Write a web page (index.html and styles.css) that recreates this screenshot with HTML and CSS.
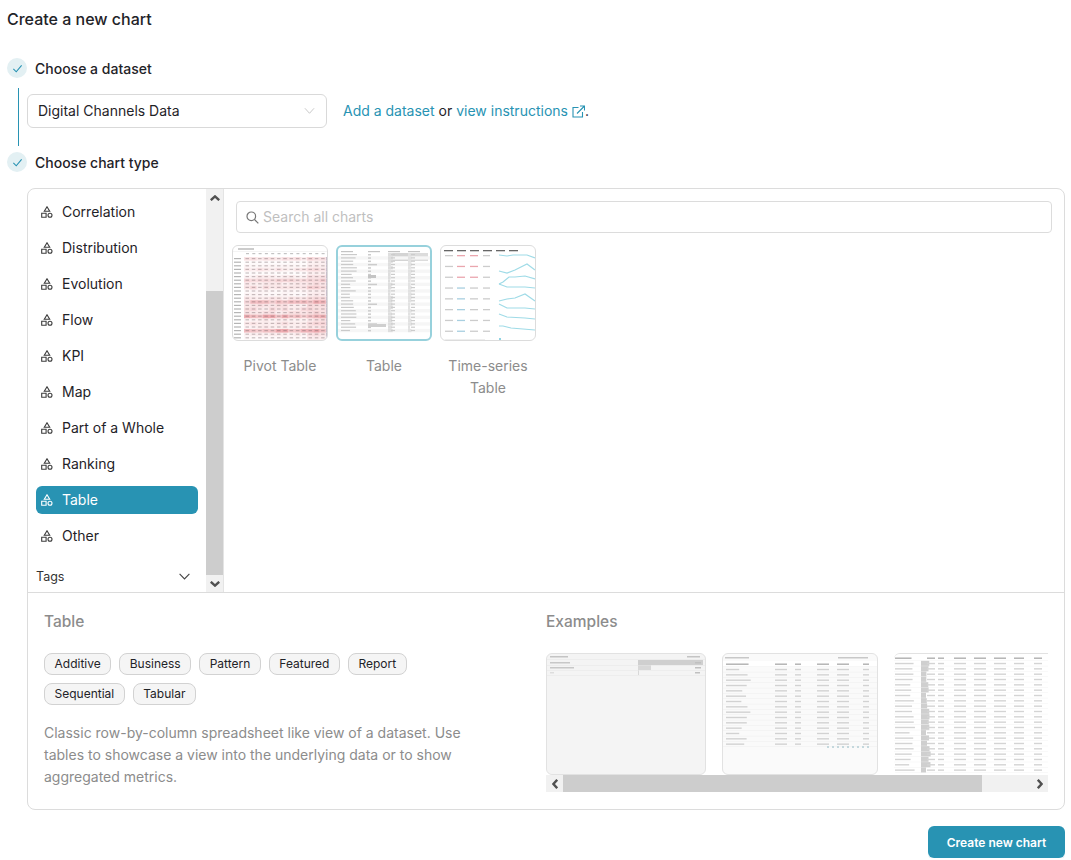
FILE: index.html
```html
<!DOCTYPE html>
<html lang="en">
<head>
  <meta charset="UTF-8" />
  <meta name="viewport" content="width=device-width, initial-scale=1.0" />
  <title>Create a new chart</title>
  <link rel="stylesheet" href="styles.css">
</head>
<body>
  <svg class="defs" width="0" height="0">
    <symbol id="shapes" viewBox="0 0 12 12">
      <path d="M6 .8 8.700 5.200H3.300Z M.7 7.300h4.400v4H.7Z" fill="none" stroke="currentColor" stroke-width="1.100" />
      <circle cx="9" cy="9.300" r="2" fill="none" stroke="currentColor" stroke-width="1.100" />
    </symbol>
    <symbol id="check" viewBox="0 0 12 12">
      <path d="M1.500 6.500 4.600 9.600 10.500 2.600" fill="none" stroke="#2893b3" stroke-width="1.200" />
    </symbol>
    <symbol id="up" viewBox="0 0 10 6">
      <path d="M.8 5.200 5 1.400 9.200 5.200" fill="none" stroke="#505050" stroke-width="2.400" />
    </symbol>
    <symbol id="down" viewBox="0 0 10 6">
      <path d="M.8.8 5 4.600 9.200.8" fill="none" stroke="#505050" stroke-width="2.400" />
    </symbol>
    <symbol id="left" viewBox="0 0 6 10">
      <path d="M5.200.8 1.400 5 5.200 9.200" fill="none" stroke="#505050" stroke-width="2.400" />
    </symbol>
    <symbol id="right" viewBox="0 0 6 10">
      <path d="M.8.8 4.600 5 .8 9.200" fill="none" stroke="#505050" stroke-width="2.400" />
    </symbol>
  </svg>

  <h1 class="page-title">Create a new chart</h1>

  <div class="step">
    <span class="step-dot"><svg class="step-check"><use href="#check" /></svg></span>
    <span class="step-label">Choose a dataset</span>
  </div>
  <div class="dataset-row">
    <div class="select">
      <span>Digital Channels Data</span>
      <svg class="select-arrow" viewBox="0 0 12 8"><path d="M1 1 6 6.500 11 1" fill="none" stroke="#c4c4c4" /></svg>
    </div>
    <p class="dataset-help">
      <a>Add a dataset</a> or <a>view instructions</a>
      <svg class="ext-icon" viewBox="0 0 13 13"><path d="M6.500 2.500H1v9.500h9.500V7 M5 8.500 12 1.500 M8 1h4.500v4.500" fill="none" stroke="#2893b3" stroke-width="1.100" /></svg>.
    </p>
  </div>
  <div class="step">
    <span class="step-dot"><svg class="step-check"><use href="#check" /></svg></span>
    <span class="step-label">Choose chart type</span>
  </div>

  <div class="panel">
    <div class="panel-top">
      <div class="sidebar">
        <ul class="cat-list">
          <li class="cat"><svg class="cat-icon"><use href="#shapes" /></svg>Correlation</li>
          <li class="cat"><svg class="cat-icon"><use href="#shapes" /></svg>Distribution</li>
          <li class="cat"><svg class="cat-icon"><use href="#shapes" /></svg>Evolution</li>
          <li class="cat"><svg class="cat-icon"><use href="#shapes" /></svg>Flow</li>
          <li class="cat"><svg class="cat-icon"><use href="#shapes" /></svg>KPI</li>
          <li class="cat"><svg class="cat-icon"><use href="#shapes" /></svg>Map</li>
          <li class="cat"><svg class="cat-icon"><use href="#shapes" /></svg>Part of a Whole</li>
          <li class="cat"><svg class="cat-icon"><use href="#shapes" /></svg>Ranking</li>
          <li class="cat active"><svg class="cat-icon"><use href="#shapes" /></svg>Table</li>
          <li class="cat"><svg class="cat-icon"><use href="#shapes" /></svg>Other</li>
        </ul>
        <div class="tags-row">
          <span>Tags</span>
          <svg class="tags-arrow" viewBox="0 0 11 7"><path d="M.6.8 5.500 6 10.400.8" fill="none" stroke="#444" stroke-width="1.100" /></svg>
        </div>
      </div>
      <div class="vscroll">
        <div class="scroll-btn"><svg class="arrow-v"><use href="#up" /></svg></div>
        <div class="vscroll-gap"></div>
        <div class="vscroll-thumb"></div>
        <div class="scroll-btn"><svg class="arrow-v"><use href="#down" /></svg></div>
      </div>
      <div class="gallery">
        <div class="search">
          <svg class="search-icon" viewBox="0 0 13 13"><circle cx="5.300" cy="5.300" r="4.300" fill="none" stroke="#777" stroke-width="1.200" /><path d="M8.500 8.500 12.300 12.300" stroke="#777" stroke-width="1.200" /></svg>
          <span>Search all charts</span>
        </div>
        <div class="chart-grid">
          <div class="chart-card">
            <div class="chart-thumb" id="thumb-pivot"></div>
            <div class="chart-name">Pivot Table</div>
          </div>
          <div class="chart-card">
            <div class="chart-thumb selected" id="thumb-table"></div>
            <div class="chart-name">Table</div>
          </div>
          <div class="chart-card">
            <div class="chart-thumb" id="thumb-series"></div>
            <div class="chart-name">Time-series Table</div>
          </div>
        </div>
      </div>
    </div>

    <div class="details">
      <div class="details-info">
        <h2 class="details-title">Table</h2>
        <div class="chips">
          <span class="chip">Additive</span>
          <span class="chip">Business</span>
          <span class="chip">Pattern</span>
          <span class="chip">Featured</span>
          <span class="chip">Report</span>
          <span class="chip">Sequential</span>
          <span class="chip">Tabular</span>
        </div>
        <p class="details-desc">Classic row-by-column spreadsheet like view of a dataset. Use tables to showcase a view into the underlying data or to show aggregated metrics.</p>
      </div>
      <div class="details-examples">
        <h2 class="details-title">Examples</h2>
        <div class="example-row">
          <div class="example ex-a" id="ex-bars"></div>
          <div class="example ex-b" id="ex-games"></div>
          <div class="example ex-c" id="ex-people"></div>
        </div>
        <div class="hscroll">
          <div class="scroll-btn"><svg class="arrow-h"><use href="#left" /></svg></div>
          <div class="hscroll-thumb"></div>
          <div class="hscroll-gap"></div>
          <div class="scroll-btn"><svg class="arrow-h"><use href="#right" /></svg></div>
        </div>
      </div>
    </div>
  </div>

  <div class="actions">
    <button class="create-btn">Create new chart</button>
  </div>

  <script src="thumbs.js"></script>
</body>
</html>
```

FILE: styles.css
```css
* { box-sizing: border-box; }
body {
  margin: 0;
  padding: 8px 6px 0 7px;
  background: #fff;
  color: #1f2328;
  font-family: Inter, "Noto Sans", sans-serif;
  font-size: 14px;
  line-height: 22px;
}
.defs { position: absolute; }
.page-title { margin: 0 0 27px; font-size: 16px; font-weight: 500; line-height: 23px; }

.step { display: flex; align-items: center; height: 20px; gap: 8px; }
.step-dot {
  display: flex;
  align-items: center;
  justify-content: center;
  width: 20px;
  height: 20px;
  border-radius: 50%;
  background: #e3f0f3;
}
.step-check { width: 11px; height: 11px; }
.step-label { font-weight: 500; padding-top: 1px; }

.dataset-row {
  display: flex;
  align-items: flex-start;
  height: 58px;
  margin: 10px 0 6px 11px;
  padding: 6px 0 0 8px;
  border-left: 1px solid #2893b3;
  gap: 16px;
}
.select {
  display: flex;
  align-items: center;
  justify-content: space-between;
  width: 300px;
  height: 34px;
  padding: 0 11px 0 10px;
  border: 1px solid #d9d9d9;
  border-radius: 6px;
}
.select-arrow { width: 11px; height: 8px; }
.dataset-help { margin: 0; padding-top: 6px; }
.dataset-help a { color: #2893b3; }
.ext-icon { width: 13px; height: 13px; vertical-align: -2px; }

.panel {
  margin: 16px 0 0 20px;
  height: 622px;
  border: 1px solid #dcdcdc;
  border-radius: 8px;
  overflow: hidden;
}
.panel-top { display: flex; height: 404px; border-bottom: 1px solid #dcdcdc; }

.sidebar { width: 178px; padding: 9px 8px 0; }
.cat-list { list-style: none; margin: 0; padding: 0; display: flex; flex-direction: column; gap: 8px; }
.cat {
  display: flex;
  align-items: center;
  height: 28px;
  padding-left: 5px;
  gap: 9px;
  border-radius: 6px;
}
.cat-icon { width: 12px; height: 12px; color: #3c3c3c; }
.cat.active { background: #2893b3; color: #fff; }
.cat.active .cat-icon { color: #fff; }
.tags-row {
  display: flex;
  align-items: center;
  justify-content: space-between;
  height: 20px;
  margin-top: 16px;
  padding: 1px 8px 0 0;
  font-size: 12.500px;
  color: #333;
}
.tags-arrow { width: 11px; height: 7px; }

.vscroll { display: flex; flex-direction: column; width: 17px; height: 403px; background: #f1f1f1; }
.vscroll-gap { height: 85px; }
.vscroll-thumb { height: 284px; background: #cdcdcd; }
.scroll-btn { display: flex; align-items: center; justify-content: center; flex: 0 0 17px; height: 17px; width: 17px; background: #f1f1f1; }
.arrow-v { width: 10px; height: 6px; }
.arrow-h { width: 6px; height: 10px; }

.gallery { flex: 1; padding: 12px 12px 0; border-left: 1px solid #e4e4e4; }
.search {
  display: flex;
  align-items: center;
  height: 32px;
  padding-left: 9px;
  gap: 4px;
  border: 1px solid #dcdcdc;
  border-radius: 4px;
  color: #bfbfbf;
}
.search-icon { width: 13px; height: 13px; }
.chart-grid { display: flex; gap: 8px; margin: 12px 0 0 -4px; }
.chart-card { width: 96px; }
.chart-thumb {
  width: 96px;
  height: 96px;
  border: 1px solid #dcdcdc;
  border-radius: 6px;
  overflow: hidden;
}
.chart-thumb.selected { border: 2px solid #97d1dc; }
.chart-thumb svg, .example svg { display: block; filter: blur(.6px); }
.chart-name { margin-top: 14px; text-align: center; color: #8c8c8c; }

.details { display: flex; height: 216px; padding: 18px 16px 0; }
.details-info { width: 502px; }
.details-examples { width: 502px; }
.details-title { margin: 0 0 20px; font-size: 15.500px; font-weight: 500; line-height: 22px; color: #8c8c8c; }
.chips { display: flex; flex-wrap: wrap; gap: 8px; width: 400px; }
.chip {
  height: 22px;
  padding: 0 9.500px;
  border: 1px solid #d2d2d2;
  border-radius: 8px;
  background: #f5f5f5;
  font-size: 12px;
  line-height: 20px;
}
.details-desc { width: 430px; margin: 17px 0 0; color: #8c8c8c; }

.example-row { display: flex; gap: 16px; width: 502px; height: 122px; overflow: hidden; }
.example { flex: none; height: 122px; border: 1px solid #e2e2e2; border-radius: 6px; overflow: hidden; }
.ex-a { width: 160px; background: #f4f4f4; }
.ex-b { width: 156px; background: #fafafa; }
.ex-c { width: 172px; background: #fff; border-width: 1px 0 0; }

.hscroll { display: flex; height: 17px; background: #f1f1f1; }
.hscroll-thumb { width: 419px; background: #cdcdcd; }
.hscroll-gap { flex: 1; }

.actions { display: flex; justify-content: flex-end; margin-top: 16px; }
.create-btn {
  width: 137px;
  height: 32px;
  border: 0;
  border-radius: 6px;
  background: #2893b3;
  color: #fff;
  font-family: inherit;
  font-size: 12px;
  font-weight: 600;
  box-shadow: 0 2px 0 #e6f3f6;
}
```

FILE: thumbs.js
```js
// the chart previews are tiny and unreadable, so draw them as marks
function rect(x, y, w, h, fill) {
  return `<rect x="${x}" y="${y}" width="${w}" height="${h}" fill="${fill}" />`;
}

function paint(id, w, h, body) {
  document.getElementById(id).innerHTML = `<svg width="${w}" height="${h}" viewBox="0 0 ${w} ${h}">${body}</svg>`;
}

// repeatable noise so the marks don't change between loads
let seed = 7;
function rnd() {
  seed = (seed * 16807) % 2147483647;
  return (seed % 1000) / 1000;
}

function pivot() {
  const heat = [.3, .05, .1, .25, .05, .2, .4, .25, .35, .1, .1, .25, .7, .3, .35, .3, .85, .2, .3, .2, .9, .2, .1];
  let s = rect(5, 2, 16, 2, "#ccc") + rect(0, 5, 94, .5, "#e8e8e8");
  for (let c = 0; c < 13; c++) s += rect(13 + c * 6.300, 7, 3, 1.200, "#c4c4c4");
  heat.forEach((h, r) => {
    const y = 12 + r * 3.600;
    s += rect(1, y, 7, 1.200, "#b5b5b5");
    for (let c = 0; c < 13; c++) {
      const a = Math.min(1, h * (.6 + rnd() * .7) + (c > 9 ? .12 : 0));
      s += rect(11 + c * 6.300, y - 1, 6.300, 3.600, `rgba(226,110,118,${a * .6})`);
      s += rect(12.500 + c * 6.300, y, 3.500, 1.200, "rgba(120,100,105,.4)");
    }
    s += rect(93, y - 1, 3, 3.600, "#c8bfcc");
  });
  paint("thumb-pivot", 94, 94, s);
}

function table() {
  let s = rect(3, 4, 12, 1.200, "#c4c4c4") + rect(30, 4, 12, 1.200, "#c4c4c4") + rect(50, 4, 12, 1.200, "#c4c4c4") + rect(70, 4, 12, 1.200, "#c4c4c4");
  s += rect(50, 6, 20, 8, "#d4d4d4") + rect(70, 6, 20, 8, "#dcdcdc");
  for (let r = 0; r < 24; r++) {
    const y = 7 + r * 3.300;
    if (r % 2) s += rect(0, y - 1, 92, 3.300, "#f6f6f6");
    s += rect(3, y, 8 + rnd() * 8, 1.200, "#cacaca");
    s += rect(30, y, 3 + (r % 6 === 3 ? 6 : 0), 1.500, "#cccccc");
    s += rect(50, y - 1, 2 + rnd() * 3, 3.300, "#dedede");
    s += rect(70, y - 1, 2 + rnd() * 2, 3.300, "#e2e2e2");
    s += rect(53, y, 4, 1.200, "#cccccc") + rect(73, y, 4, 1.200, "#cccccc");
  }
  s += rect(30, 28, 8, 3, "#c4c4c4") + rect(30, 77, 18, 3, "#cfcfcf");
  paint("thumb-table", 92, 92, s);
}

function series() {
  let s = "";
  for (let i = 0; i < 6; i++) s += rect(3 + i * 13, 4, 9, 1.300, "#666");
  const colors = ["#eaa6ae", "#eaa6ae", "#eaa6ae", "#a8cfe0", "#a8cfe0", "#a8cfe0", "#a8cfe0", "#a8cfe0"];
  const lines = [
    "M58 9 66 10 72 9 86 9 94 12",
    "M58 25 66 27 74 24 86 18 94 24",
    "M58 38 62 36 68 31 74 31 84 30 94 33",
    "M58 38 66 41 84 41 94 42",
    "M58 55 66 53 74 52 84 48 94 55",
    "M58 58 66 62 84 62 94 63",
    "M58 68 66 71 84 72 94 73",
    "M58 80 62 80 70 82 94 84"
  ];
  colors.forEach((c, r) => {
    const y = 9 + r * 10.800;
    s += rect(4, y, 8, 1.300, "#cccccc") + rect(16, y, 8, 1.300, c) + rect(29, y, 8, 1.300, r < 3 ? c : "#cccccc");
    s += rect(42, y, 7, 1.300, "#cccccc");
    s += `<path d="${lines[r]}" fill="none" stroke="#9fdbe7" stroke-width="1.200" />`;
  });
  s += rect(58, 92, 2, 2, "#8fd3e2") + rect(4, 93, 40, 1, "#eee");
  paint("thumb-series", 94, 94, s);
}

function examples() {
  let a = rect(3, 2, 18, 1.500, "#c4c4c4") + rect(140, 2, 13, 1.500, "#c4c4c4");
  a += rect(91, 6, 65, 5, "#cfcfcf") + rect(91, 11, 13, 5, "#d8d8d8") + rect(91, 16, 1, 5, "#d8d8d8");
  a += rect(0, 5.500, 158, .500, "#e6e6e6") + rect(0, 11, 158, .500, "#e6e6e6") + rect(0, 16, 158, .500, "#e6e6e6") + rect(0, 21, 158, .500, "#e6e6e6");
  a += rect(3, 8, 20, 1.500, "#c8c8c8") + rect(3, 13, 24, 1.500, "#c8c8c8") + rect(3, 18, 4, 1.500, "#ddd") + rect(148, 8, 6, 1.500, "#c0c0c0") + rect(148, 13, 6, 1.500, "#c0c0c0") + rect(148, 18, 5, 1.500, "#c0c0c0");
  paint("ex-bars", 158, 120, a);

  const gameCols = [[3, 22], [52, 12], [72, 6], [94, 12], [114, 12], [140, 6]];
  let b = rect(0, 7, 154, 6, "#fff") + rect(2, 3, 24, 1.500, "#c8c8c8") + rect(115, 3, 30, 1.500, "#c8c8c8");
  for (let r = 0; r < 16; r++) {
    const y = 9.500 + r * 5.330;
    gameCols.forEach(([x, w], c) => {
      b += rect(x, y, c === 0 ? w * .6 + rnd() * 12 : w, 1.400, r === 0 ? "#b0b0b0" : "#d2d2d2");
    });
    b += rect(0, y + 3, 154, .500, "#eeeeee");
  }
  for (let i = 0; i < 9; i++) b += rect(104 + i * 5, 92, 2, 2, "#c4d8dd");
  paint("ex-games", 154, 120, b);

  const peopleCols = [[1, 14], [33, 8], [44, 6], [60, 12], [80, 12], [100, 12], [120, 10], [140, 8]];
  let p = "";
  for (let r = 0; r < 22; r++) {
    const y = 3.500 + r * 5.330;
    const bar = r === 0 ? 0 : 5 + rnd() * 5;
    if (r) p += rect(27, y - 2, r % 7 === 0 ? 5 : bar, 5.330, "#cfcfcf");
    peopleCols.forEach(([x, w], c) => {
      p += rect(x, y, c === 0 ? w + rnd() * 6 : w, 1.400, r === 0 ? "#b0b0b0" : "#d4d4d4");
    });
    p += rect(0, y + 3, 172, .500, "#f2f2f2");
  }
  paint("ex-people", 172, 122, p);
}

pivot();
table();
series();
examples();
```
